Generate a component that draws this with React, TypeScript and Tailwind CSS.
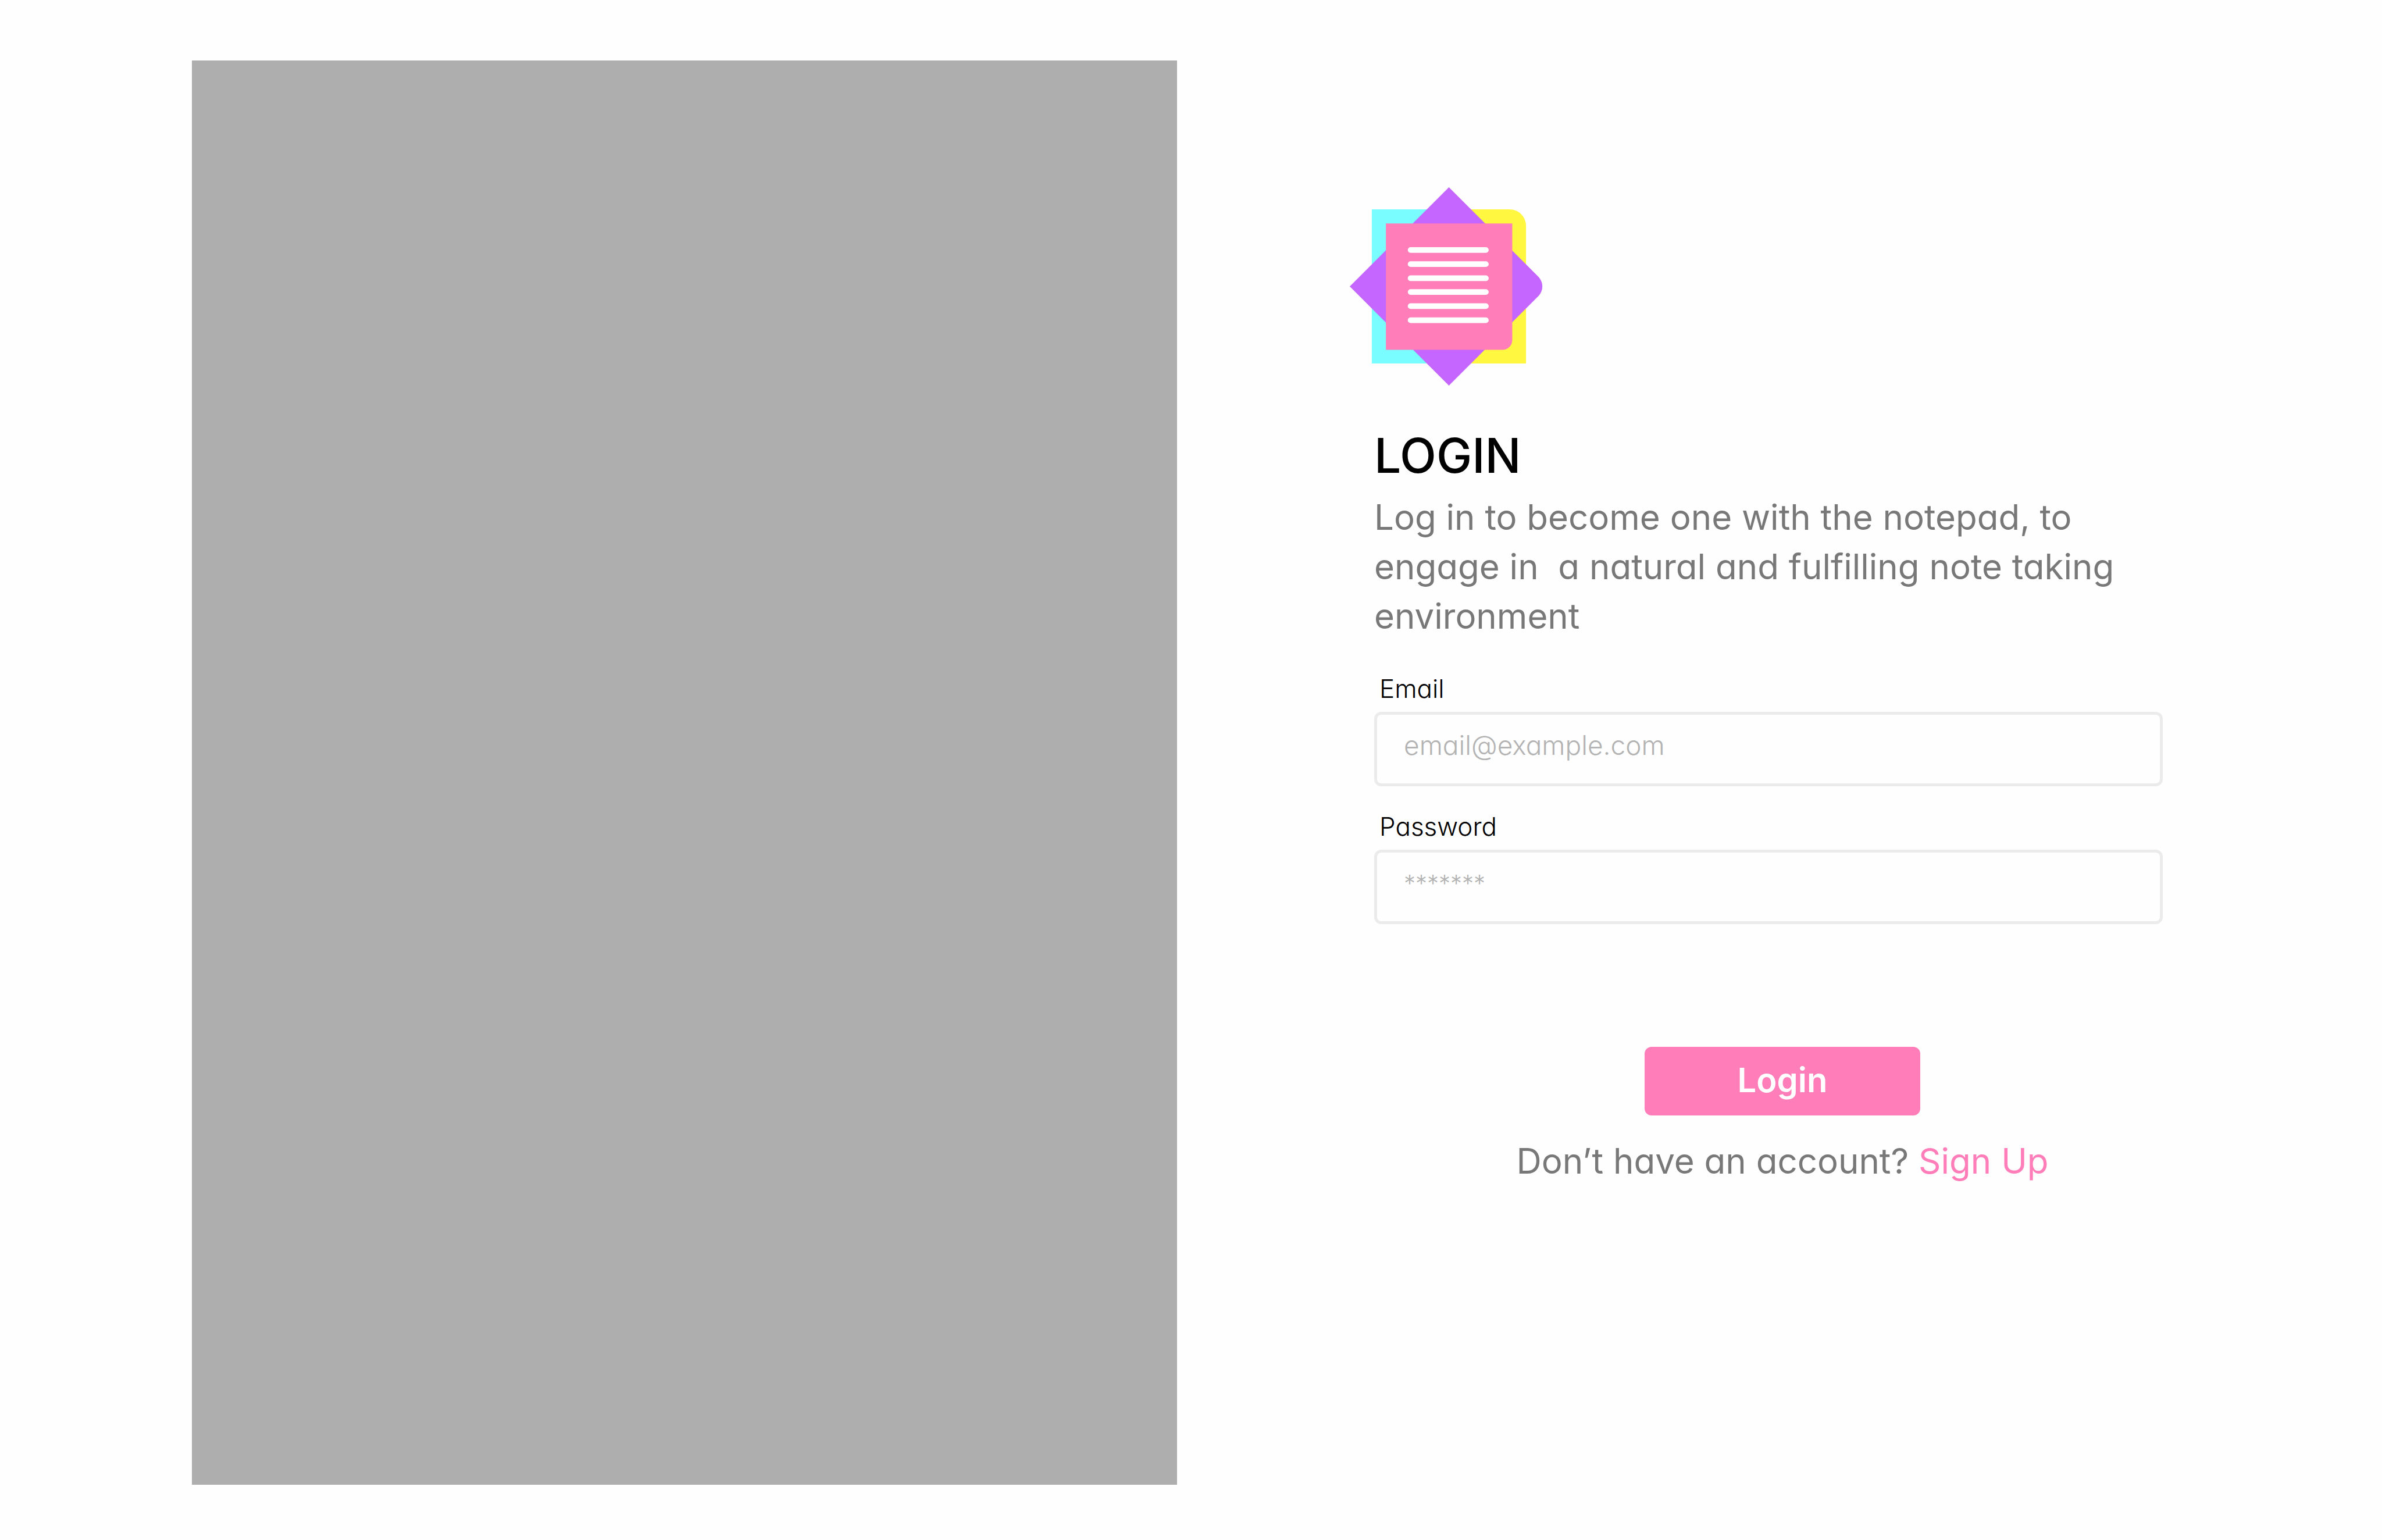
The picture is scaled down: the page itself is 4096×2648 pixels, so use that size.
const LINE_TOPS = [174, 215, 256, 296, 337, 378];

const INTRO =
  'Log in to become one with the notepad, to engage in \u00a0a natural and fulfilling note taking environment';

function Logo() {
  return (
    <svg viewBox="0 0 576 576" className="-ml-[42px] size-[341px]" role="img" aria-label="Notepad logo">
      <path d="M64 64H289V512H64Z" fill="#7afdff" />
      <path d="M288 64H464A48 48 0 0 1 512 112V512H288Z" fill="#fff740" />
      <path d="M288 0L547.7 259.7A40 40 0 0 1 547.7 316.3L288 576L0 288Z" fill="#c466ff" />
      <path d="M105 105H472V444A28 28 0 0 1 444 472H105Z" fill="#ff7db8" />
      {LINE_TOPS.map((y) => (
        <rect key={y} x="168.5" y={y} width="235" height="16.5" rx="8.25" fill="#ffffff" />
      ))}
    </svg>
  );
}

type FieldProps = { id: string; label: string; type: string; placeholder: string; textSize: string };

function Field({ id, label, type, placeholder, textSize }: FieldProps) {
  return (
    <div className="flex flex-col gap-2">
      <label htmlFor={id} className="pl-[9px] text-[44px] leading-[64px] font-light text-black">
        {label}
      </label>
      <input
        id={id}
        type={type}
        placeholder={placeholder}
        className={`h-32 w-full rounded-xl border-[5px] border-[#ebebeb] bg-transparent px-[46px] pb-[14px] font-light text-black outline-none placeholder:text-[#b3b3b3] ${textSize}`}
      />
    </div>
  );
}

export default function App() {
  return (
    <main className="grid min-h-screen grid-cols-[1694fr_1404fr] gap-[339px] bg-[#fefefe] pt-[104px] pr-[329px] pb-[95px] pl-[330px] font-['Inter','Open_Sans',sans-serif] [font-feature-settings:'cv11']">
      <div className="bg-[#aeaeae]" />
      <section className="flex flex-col pt-[218px]">
        <Logo />
        <h1 className="mt-[73px] text-[82px] leading-[96px] font-medium text-black">LOGIN</h1>
        <p className="mt-[15px] pr-12 text-[60px] leading-[85px] text-[#787878]">{INTRO}</p>
        <form className="flex flex-col" onSubmit={(e) => e.preventDefault()}>
          <div className="mt-[50px] flex flex-col gap-[37px] pr-12">
            <Field id="email" label="Email" type="email" placeholder="email@example.com" textSize="text-[46px]" />
            <Field id="password" label="Password" type="password" placeholder="*******" textSize="text-[40px]" />
          </div>
          <button
            type="submit"
            className="mt-[211px] h-[118px] w-[474px] self-center rounded-xl bg-[#ff7db8] pb-1 text-[58px] font-semibold text-white"
          >
            Login
          </button>
        </form>
        <p className="mt-9 text-center text-[60px] leading-[85px] text-[#787878]">
          Don’t have an account?{' '}
          <a href="#signup" className="text-[#ff7db8]">
            Sign Up
          </a>
        </p>
      </section>
    </main>
  );
}
